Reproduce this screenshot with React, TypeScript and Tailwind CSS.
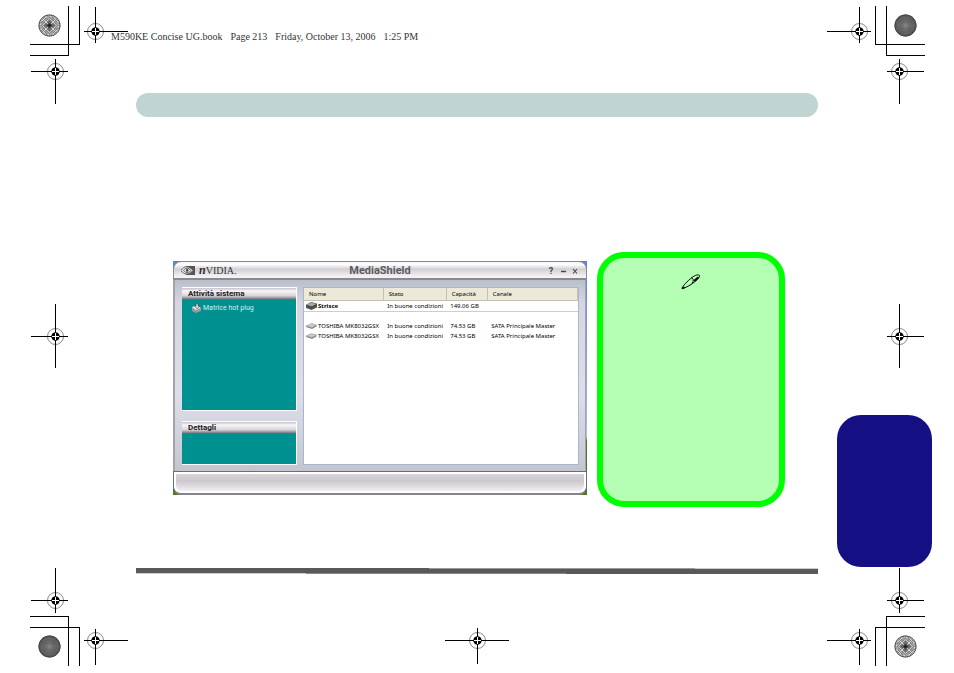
import { ReactNode } from "react";

const docInfo = ["M590KE Concise UG.book", "Page 213", "Friday, October 13, 2006", "1:25 PM"];

const columns = ["Nome", "Stato", "Capacità", "Canale"];

const drives = [
  ["TOSHIBA MK8032GSX", "In buone condizioni", "74.53 GB", "SATA Principale Master"],
  ["TOSHIBA MK8032GSX", "In buone condizioni", "74.53 GB", "SATA Principale Master"],
];

const rays = Array.from({ length: 36 }, (_, i) => i * 10);

// Registration target: the lines run out from the centre by different amounts
function Target({ cx, cy, left, right, up, down }: Record<"cx" | "cy" | "left" | "right" | "up" | "down", number>) {
  return (
    <g fill="none">
      <circle cx={cx} cy={cy} r="8" stroke="#777" strokeWidth="0.9" />
      <path
        d={`M${cx - left} ${cy}H${cx + right}M${cx} ${cy - up}V${cy + down}`}
        stroke="#000"
        shapeRendering="crispEdges"
      />
      <circle cx={cx} cy={cy} r="4.2" fill="#000" />
      <path d={`M${cx - 3.5} ${cy}h7M${cx} ${cy - 3.5}v7`} stroke="#fff" />
    </g>
  );
}

function Rosette({ dark }: { dark?: boolean }) {
  return (
    <g fill="none" transform="translate(19.5 19.5)">
      <circle r="11" fill={dark ? "#4a4a4a" : "#d6d6d6"} />
      {rays.map((angle) => (
        <path
          key={angle}
          d="M0 0H11"
          transform={`rotate(${angle})`}
          stroke={dark ? "#858585" : "#444"}
          strokeWidth={dark ? "0.4" : "0.6"}
        />
      ))}
      {dark ? (
        <g stroke="#858585" strokeWidth="0.4">
          <circle r="3" />
          <circle r="5.5" />
          <circle r="8" />
        </g>
      ) : (
        <g stroke="#f4f4f4" strokeWidth="0.7">
          <path d="M0-7L7 0L0 7L-7 0ZM-6-6L6 6M6-6L-6 6" />
          <circle r="9" strokeDasharray="2 2.7" />
        </g>
      )}
      <circle r="10.6" stroke="#444" strokeWidth="0.8" />
      {!dark && <circle r="1.8" fill="#222" />}
    </g>
  );
}

function Corner({ className = "", dark }: { className?: string; dark?: boolean }) {
  return (
    <svg className={`h-[98px] w-[98px] shrink-0 ${className}`} viewBox="0 0 98 98" aria-hidden="true">
      <path
        d="M0 38.5H50M0 49.5H39M38.5 0V49M49.5 0V39"
        stroke="#000"
        shapeRendering="crispEdges"
        fill="none"
      />
      <Rosette dark={dark} />
      <Target cx={65.5} cy={25.5} left={11.5} right={32.5} up={24.5} down={11.5} />
      <Target cx={25.5} cy={65.5} left={24.5} right={12.5} up={12.5} down={32.5} />
    </svg>
  );
}

function SideMark({ className = "" }: { className?: string }) {
  return (
    <svg className={`h-16 w-[98px] shrink-0 ${className}`} viewBox="0 0 98 64" aria-hidden="true">
      <Target cx={25.5} cy={32.5} left={24.5} right={12.5} up={32.5} down={31.5} />
    </svg>
  );
}

function DiskIcon({ dark }: { dark?: boolean }) {
  return (
    <svg className="h-[9px] w-[11px] shrink-0" viewBox="0 0 11 9" aria-hidden="true">
      {dark && <path d="M0 4l5-3 6 1.500v4L5.500 9 0 7z" fill="#555" />}
      <path d="M0 4L5.500 1.500 10.500 3 6 5.500z" fill={dark ? "#aaa" : "#ccc"} stroke="#888" strokeWidth="0.5" />
      <path d="M0 4l6 1.500L10.500 3v1.500L6 7 0 5z" fill={dark ? "#444" : "#888"} />
    </svg>
  );
}

function Panel({ title, bodyClass, children }: { title: string; bodyClass: string; children?: ReactNode }) {
  return (
    <section className="border-r border-b border-white">
      <h2 className="h-[13px] border-t border-white bg-[linear-gradient(#c4c2c8,#f8f6f8_25%,#d8d4da_65%,#5c5a66)] pl-1.5 text-[8px] leading-[12px] font-bold text-[#222]">
        {title}
      </h2>
      <div className={`bg-[#009090] pt-[3px] pl-2.5 ${bodyClass}`}>{children}</div>
    </section>
  );
}

function DriveTable() {
  return (
    <div className="border border-[#a5b9cc] bg-white">
      <table className="w-full table-fixed border-collapse text-left font-['Noto_Sans',sans-serif] text-[6px] leading-[10px] whitespace-nowrap text-black">
        <colgroup>
          <col className="w-[29%]" />
          <col className="w-[23%]" />
          <col className="w-[15%]" />
          <col className="w-[33%]" />
        </colgroup>
        <thead>
          <tr className="h-3 border-b border-[#c5c2b2] bg-[#ece9d8]">
            {columns.map((name) => (
              <th key={name} className="border-r border-[#c5c2b2] p-0 pl-[5px] font-normal">
                {name}
              </th>
            ))}
          </tr>
        </thead>
        <tbody>
          <tr className="h-[11px] border-b border-[#add8e6]">
            <td className="p-0">
              <span className="flex items-center gap-px pl-0.5 font-bold">
                <DiskIcon dark />
                Strisce
              </span>
            </td>
            <td className="p-0 pl-1">In buone condizioni</td>
            <td className="p-0 pl-1">149.06 GB</td>
            <td className="p-0" />
          </tr>
          <tr className="h-[10px]">
            <td colSpan={4} className="p-0" />
          </tr>
          {drives.map((drive, i) => (
            <tr key={i}>
              <td className="p-0">
                <span className="flex items-center gap-px pl-0.5">
                  <DiskIcon />
                  {drive[0]}
                </span>
              </td>
              <td className="p-0 pl-1">{drive[1]}</td>
              <td className="p-0 pl-1">{drive[2]}</td>
              <td className="p-0 pl-1">{drive[3]}</td>
            </tr>
          ))}
        </tbody>
      </table>
    </div>
  );
}

function MediaShield() {
  return (
    <div className="mt-[9px] bg-[linear-gradient(#4f86e8,#a9bfe8_75%,#4c7a1e_77%)] font-[Roboto,sans-serif]">
      <header className="grid h-[19px] grid-cols-3 items-center rounded-t-lg border border-b-2 border-[#8a8890] bg-[linear-gradient(#f4f2f4,#ffffff_15%,#d3cfd5_45%,#f3f1f3_90%)] pr-[7px] pl-[7px]">
        <div className="flex items-center gap-1">
          <svg className="h-[9px] w-[14px]" viewBox="0 0 14 9" aria-hidden="true">
            <path d="M5 0H14V9H5z" fill="#555" />
            <path d="M0 4.500C3-.5 8-.5 12 4.500 8 9.500 3 9 0 4.500z" fill="#eee" stroke="#555" strokeWidth="0.9" />
            <path d="M2.500 4.500C4.500 1.500 7.500 1.500 10 4.500 7.500 7.500 4.500 7 2.500 4.500z" fill="none" stroke="#555" strokeWidth="0.9" />
            <circle cx="6.200" cy="4.400" r="1.300" fill="#444" />
          </svg>
          <span className="font-['Liberation_Serif',serif] text-[10px] leading-4 text-[#333]">
            <i className="text-xs font-bold">n</i>VIDIA.
          </span>
        </div>
        <h1 className="text-center text-[11px] leading-4 font-bold text-[#5c5a60]">MediaShield</h1>
        <div className="flex justify-end gap-1 text-[#444]">
          <button type="button" aria-label="Guida" className="w-2 text-[9px] leading-3 font-bold">
            ?
          </button>
          <button type="button" aria-label="Riduci a icona" className="flex w-2 items-center justify-center">
            <svg className="h-2 w-2" viewBox="0 0 8 8">
              <path d="M2 4.500H7" stroke="currentColor" strokeWidth="1.400" />
            </svg>
          </button>
          <button type="button" aria-label="Chiudi" className="flex w-2 items-center justify-center">
            <svg className="h-2 w-2" viewBox="0 0 8 8">
              <path d="M2 2L6 6.500M6 2L2 6.500" stroke="currentColor" strokeWidth="1.100" />
            </svg>
          </button>
        </div>
      </header>
      <main className="mr-px grid grid-cols-[115fr_276fr] gap-1.5 border-r border-l-2 border-[#a3a3ad] bg-[linear-gradient(#b9c0ca,#d5d6e0_12%,#dedeea_60%,#c3c6d0)] pt-[7px] pr-1.5 pb-1.5 pl-[7px]">
        <div className="flex flex-col gap-2.5">
          <Panel title="Attività sistema" bodyClass="h-[110px]">
            <a href="#hotplug" className="flex items-center gap-px text-[7px] leading-[10px] text-[#d5eeee]">
              <svg className="h-[10px] w-[10px]" viewBox="0 0 10 10" aria-hidden="true">
                <path d="M0 4l5-1 4 2v3L4 10 0 8z" fill="#999" />
                <path d="M0 4l5-1 4 2-5 2z" fill="#eee" />
                <path d="M6 0v3h2L5 6 3 3h1V1z" fill="#ddd" stroke="#444" strokeWidth="0.6" />
              </svg>
              Matrice hot plug
            </a>
          </Panel>
          <Panel title="Dettagli" bodyClass="h-[30px]" />
        </div>
        <DriveTable />
      </main>
      <footer className="h-6 rounded-b-lg border border-b-2 border-[#6e6c74] border-b-[#85838b] bg-white p-0.5">
        <div className="h-full rounded-b-md bg-[linear-gradient(#d9d5db,#ccc8ce_40%,#f0eef0)]" />
      </footer>
    </div>
  );
}

export default function App() {
  return (
    <div className="grid min-h-screen grid-cols-[98px_minmax(0,1fr)_98px] bg-white pt-1.5 pr-[29px] pb-[7px] pl-[30px]">
      <div className="flex flex-col justify-between">
        <Corner />
        <SideMark />
        <Corner dark className="-scale-y-100" />
      </div>

      <div className="flex flex-col pr-[9px] pl-2">
        <p className="mt-6 -ml-[25px] flex gap-2 font-['Liberation_Serif',serif] text-[10px] leading-[14px] whitespace-nowrap text-[#333]">
          {docInfo.map((part) => (
            <span key={part}>{part}</span>
          ))}
        </p>
        <div className="mt-[49px] h-6 rounded-full bg-[#c0d5d2]" />

        <div className="mt-[135px] grid grid-cols-[414fr_188fr] items-start gap-2.5 pr-[33px] pl-[37px]">
          <MediaShield />
          <aside className="flex h-[255px] justify-center rounded-[27px] border-6 border-[#00ff00] bg-[#b4ffb4] pt-4">
            <svg className="h-4 w-5" viewBox="0 0 20 16" fill="none" stroke="#000" role="img" aria-label="Nota">
              <path d="M1 14.500C2 11.500 6 7.500 11 3.500 14 1 18 .2 18.500 1.500 19.200 3.500 14.500 7.500 10 10.500 6 13 3.500 14 1 14.500z" />
              <path d="M10.500 4C12 4.300 12.500 5.500 12 7.500L11 9.500" strokeWidth="0.9" />
              <path d="M13 7L17.500 3.200" strokeWidth="2" />
              <path d="M1 14.500l2.500-1" strokeWidth="1.600" />
            </svg>
          </aside>
        </div>

        <div className="mt-[61px] h-1.5 bg-[#595959] bg-[linear-gradient(90deg,#595959_43%,#999_43%,#999_82%,#ccc_82%),linear-gradient(90deg,#ccc_25%,#888_25%,#888_63%,#595959_63%)] bg-[length:100%_1px] bg-[position:top,bottom] bg-no-repeat" />
        <svg className="mt-[54px] h-9 w-16 self-center" viewBox="0 0 64 36" aria-hidden="true">
          <Target cx={32.5} cy={12.5} left={32.5} right={31.5} up={12.5} down={23.5} />
        </svg>
      </div>

      <div className="flex flex-col">
        <Corner dark className="-scale-x-100" />
        <SideMark className="mt-[200px] -scale-x-100" />
        <div className="mt-[47px] -mr-[7px] ml-2.5 h-[152px] rounded-[24px] bg-[#140f82]" />
        <Corner className="mt-auto -scale-100" />
      </div>
    </div>
  );
}
